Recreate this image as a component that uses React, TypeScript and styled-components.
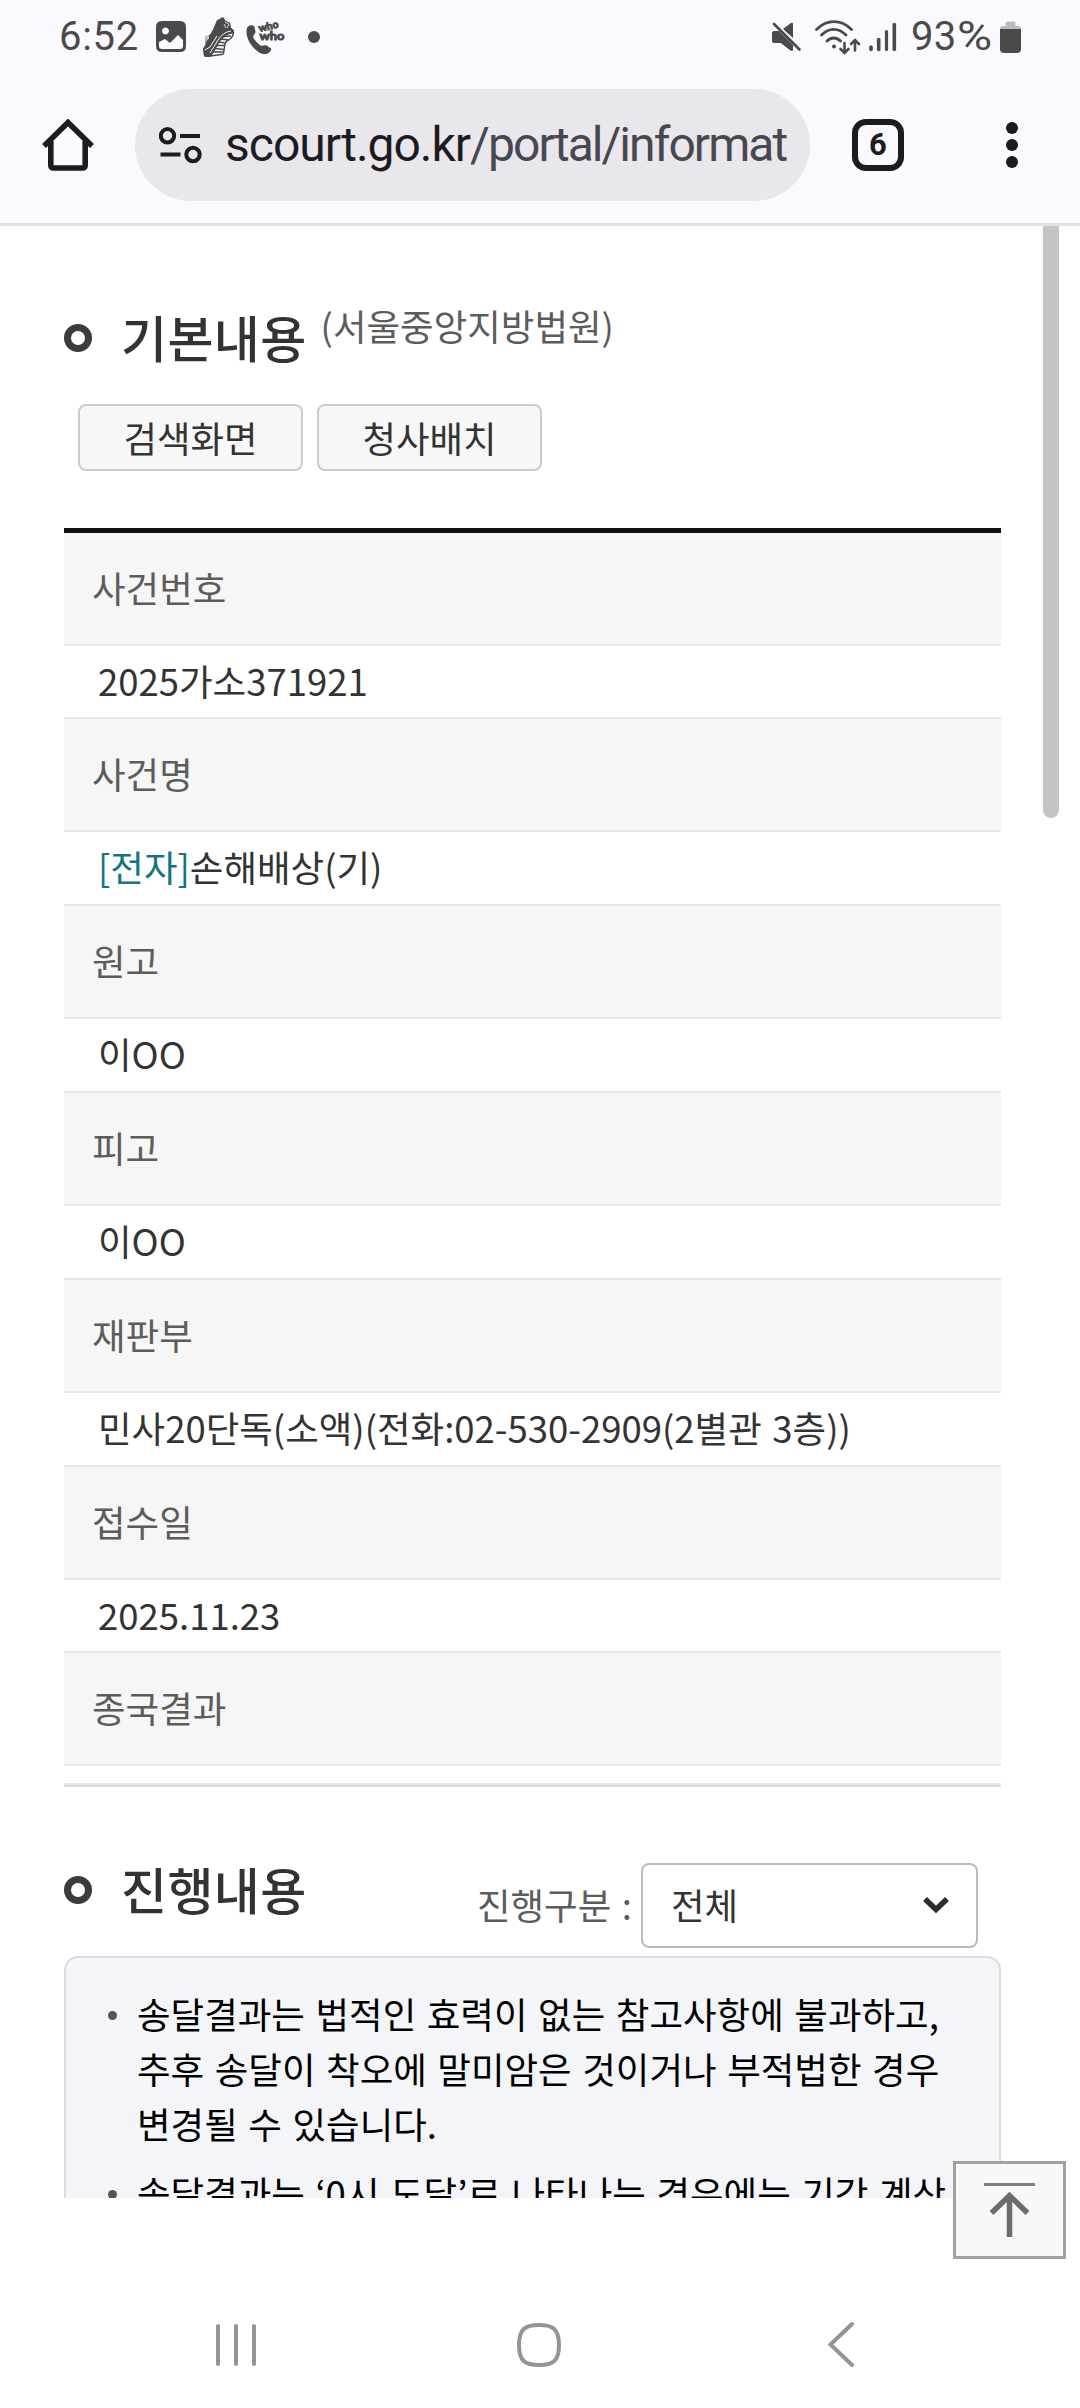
import React from "react";
import styled, { createGlobalStyle } from "styled-components";

const korean = `"Noto Sans CJK KR", "Noto Sans", sans-serif`;
const system = `Roboto, "Noto Sans CJK KR", sans-serif`;
const ink = "#1b1b20";
const statusInk = "#4a4a4a";

const GlobalStyle = createGlobalStyle`
  *, *::before, *::after { box-sizing: border-box; }
  html, body { margin: 0; padding: 0; background: #fff; }
`;

const Screen = styled.div`
  width: 1080px;
  height: 2408px;
  display: flex;
  flex-direction: column;
  overflow: hidden;
  background: #fff;
  font-family: ${korean};
`;

const BrowserHead = styled.header`
  height: 226px;
  flex: none;
  background: #faf9ff;
  border-bottom: 3px solid #e2e1e8;
`;

const StatusBar = styled.div`
  height: 74px;
  display: flex;
  align-items: center;
  justify-content: space-between;
  padding: 0 59px 0 59px;
  color: ${statusInk};
  font-family: ${system};
  font-size: 40px;
  line-height: 74px;
`;

const StatusGroup = styled.div`
  display: flex;
  align-items: center;
  svg { display: block; flex: none; }
`;

const Clock = styled.span`
  width: 94px;
  letter-spacing: 0.7px;
`;

const Charge = styled.span`
  width: 89px;
  letter-spacing: 0.3px;
  white-space: nowrap;
`;

const Percent = styled.span`
  display: inline-block;
  transform: scaleX(1.2);
  transform-origin: left center;
`;

const Toolbar = styled.div`
  height: 142px;
  display: flex;
  align-items: center;
  padding: 0 0 0 42px;
  svg { display: block; flex: none; }
`;

const AddressBar = styled.div`
  width: 675px;
  height: 112px;
  margin-left: 41px;
  padding-left: 24px;
  border-radius: 56px;
  background: #e9e7ec;
  display: flex;
  align-items: center;
`;

const Url = styled.span`
  margin-left: 23px;
  font-family: ${system};
  font-size: 48px;
  line-height: 60px;
  letter-spacing: -1px;
  white-space: nowrap;
  color: ${ink};
`;

const UrlPath = styled.span`
  letter-spacing: -1.95px;
  color: #47474f;
`;

const TabCount = styled.div`
  width: 52px;
  height: 52px;
  margin-left: 42px;
  border: 6px solid ${ink};
  border-radius: 14px;
  display: flex;
  align-items: center;
  justify-content: center;
  font-family: ${system};
  font-size: 31px;
  line-height: 40px;
  font-weight: 700;
  color: ${ink};
`;

const MenuDots = styled.div`
  margin-left: 102px;
  display: flex;
  flex-direction: column;
  gap: 5px;
`;

const MenuDot = styled.i`
  width: 12px;
  height: 12px;
  border-radius: 50%;
  background: ${ink};
`;

const Viewport = styled.main`
  position: relative;
  flex: none;
  height: 1972px;
  overflow: hidden;
  padding: 74px 79px 0 64px;
  word-spacing: 2.4px;
`;

const ScrollThumb = styled.div`
  position: absolute;
  top: 0;
  right: 21px;
  width: 16px;
  height: 592px;
  border-radius: 0 0 8px 8px;
  background: #c4c4c4;
`;

const SectionHead = styled.div`
  display: flex;
  align-items: flex-start;
  height: 74px;
`;

const Ring = styled.i`
  width: 28px;
  height: 28px;
  margin: 24px 29px 0 0;
  border: 7px solid #3c3c3e;
  border-radius: 50%;
  flex: none;
`;

const Title = styled.h2`
  margin: 0;
  font-size: 50px;
  line-height: 72px;
  font-weight: 500;
  letter-spacing: 0.4px;
  color: #333;
`;

const Court = styled.span`
  margin-left: 14px;
  font-size: 36.5px;
  line-height: 52px;
  color: #5c5c5c;
`;

const Actions = styled.div`
  display: flex;
  gap: 14px;
  padding: 30px 0 57px 14px;
`;

const ActionButton = styled.button`
  width: 225px;
  height: 67px;
  padding: 0 0 2px;
  border: 2px solid #ccc;
  border-radius: 8px;
  background: #f7f7f7;
  color: #333;
  font: 400 36.4px/60px ${korean};
`;

const CaseTable = styled.dl`
  margin: 0;
  border-top: 5px solid #111114;
  border-bottom: 2px solid #dcdcdc;
`;

const Label = styled.dt`
  height: 113px;
  padding-left: 28px;
  border-bottom: 2px solid #e8e8e8;
  background: #f6f6f6;
  font-size: 36.5px;
  line-height: 109px;
  color: #5c5c5c;
`;

const Value = styled.dd<{ $height: number }>`
  margin: 0;
  height: ${(p) => p.$height}px;
  padding-left: 34px;
  border-bottom: 2px solid #e8e8e8;
  font-size: 36.5px;
  line-height: 69px;
  color: #333;
  white-space: nowrap;
`;

const Tag = styled.span`
  color: #14747f;
`;

const ProgressHead = styled(SectionHead)`
  height: 103px;
  margin-top: 66px;
`;

const ProgressTitle = styled(Title)`
  line-height: 70px;
`;

const ProgressRing = styled(Ring)`
  margin-top: 23px;
`;

const FilterLabel = styled.label`
  margin: 10px 0 0 auto;
  display: flex;
  align-items: center;
  gap: 9px;
  padding-right: 23px;
  font-size: 36.5px;
  line-height: 83px;
  white-space: pre;
  color: #5c5c5c;
`;

const FilterName = styled.span`
  padding-bottom: 2px;
`;

const Select = styled.span`
  width: 337px;
  height: 85px;
  padding: 0 27px 0 28px;
  border: 2px solid #bbb;
  border-radius: 8px;
  background: #fff;
  display: flex;
  align-items: center;
  justify-content: space-between;
  color: #333;
`;

const Selected = styled.span`
  line-height: 76px;
  padding-bottom: 2px;
`;

const Notice = styled.ul`
  margin: 0;
  height: 420px;
  padding: 28px 0 0 46px;
  list-style: none;
  border: 2px solid #dadce0;
  border-radius: 14px;
  background: #f4f5f8;
`;

const NoticeItem = styled.li`
  display: flex;
  margin-bottom: 14px;
  font-size: 36.5px;
  line-height: 55px;
  color: #000;
  white-space: pre;
`;

const Bullet = styled.i`
  width: 9px;
  height: 9px;
  margin: 25px 20px 0 -4px;
  border-radius: 50%;
  background: #555;
  flex: none;
`;

const NavBar = styled.nav`
  height: 210px;
  flex: none;
  display: flex;
  align-items: flex-start;
  justify-content: space-between;
  padding: 122px 222px 0 214px;
  svg { display: block; }
`;

const HomeKey = styled.svg`
  margin-right: 7px;
`;

const TopButton = styled.button`
  position: absolute;
  left: 953px;
  top: 2161px;
  width: 113px;
  height: 98px;
  padding: 0;
  border: 3px solid #a2a2a2;
  background: #f8f8f8;
  svg { display: block; }
`;

const Space = styled.span<{ $w: number }>`
  width: ${(p) => p.$w}px;
  flex: none;
`;

const NoticeDot = styled.i`
  width: 12px;
  height: 12px;
  border-radius: 50%;
  background: ${statusInk};
`;

const GalleryIcon = () => (
  <svg width="32" height="32" viewBox="0 0 32 32">
    <path
      fill={statusInk}
      fillRule="evenodd"
      d="M7 0h18q6 0 6 6v19q0 6-6 6H7q-6 0-6-6V6q0-6 6-6zM4 21v4q0 3 3 3h18q3 0 3-3v-6l-5-5-8 8-5-4zM10.500 6.500a3.500 3.500 0 1 0 .01 0z"
    />
  </svg>
);

const ShoeIcon = () => (
  <svg width="32" height="40" viewBox="0 0 32 40">
    <path
      fill={statusInk}
      d="M14 3l3-1 1-1.500h3l1 3 5 2 1 5 3 3v3c-6 0-10 3-14 8-2 3-5 9-9 15l-6 1-1.500-3-.5-6 2.500-4-.5-8 5-2 3-5z"
    />
    <path d="M2 20q0-2 4-2v4q-2 0-3 4z" fill="#faf9ff" opacity=".7" />
    <path d="M28 14q-8 1-13 9L7 36M2 33l5-3 7-11" stroke="#faf9ff" strokeWidth="1" fill="none" />
    <path d="M22 5l4 2-2 4M21 7l2 4" stroke="#faf9ff" strokeWidth=".8" fill="none" />
    <path
      d="M5 39.300l15.500-2M10 35h10.500M12 31.500l9 1M13 28.500h9M15 25l8 1M17 22l9 1M20 19.500l8-.5M30.500 15q0 5-5 8-4 2-4 7l-1 7"
      stroke={statusInk}
      strokeWidth="1.400"
      fill="none"
    />
  </svg>
);

const WhoWhoIcon = () => (
  <svg width="42" height="40" viewBox="0 0 42 40" overflow="visible">
    <path
      fill={statusInk}
      d="M2 11c1-3 6-4 7.500-1l1 5c0 2-2.500 3-2.500 5 2 4 4.500 6 7.500 8.500 2 1 4-1 6 0l4.500 3c1 2-2 5-5 5.500-5 1-11-3.500-15-9.500C2.500 23 .5 16 2 11z"
    />
    <g fill={statusInk} stroke={statusInk} strokeWidth=".9" fontFamily="Lato, sans-serif" fontWeight="700">
      <text x="14.500" y="15" fontSize="10.500" textLength="20" lengthAdjust="spacingAndGlyphs" transform="rotate(-13 14.500 15)">
        who
      </text>
      <text x="14.500" y="23.300" fontSize="11.500" textLength="25" lengthAdjust="spacingAndGlyphs">
        who
      </text>
    </g>
  </svg>
);

const MuteIcon = () => (
  <svg width="32" height="32" viewBox="0 0 32 32">
    <path fill={statusInk} d="M1 13q0-3 3-3h4l14 13v5q0 3-3 1l-9-7H4q-3 0-3-3zM12 8l8-6q2-1 2 1v14z" />
    <path d="M3 3l26 26" stroke="#faf9ff" strokeWidth="5" />
    <path fill={statusInk} d="M1 13q0-3 3-3h4l14 14v4q0 3-3 1l-9-7H4q-3 0-3-3z" />
    <path d="M3 3l25.500 25.500" stroke={statusInk} strokeWidth="2.600" strokeLinecap="round" />
  </svg>
);

const WifiIcon = () => (
  <svg width="46" height="36" viewBox="0 0 46 36" fill="none" stroke={statusInk} strokeWidth="2.800" strokeLinecap="round">
    <path d="M1.500 10.500C12 0 26 0 36.500 10.500M6.500 16C14 8.500 23.500 8.500 31 16M12 22C16 18 21.500 18 25.500 22" />
    <circle cx="19" cy="27.500" r="2" fill={statusInk} stroke="none" />
    <path d="M29.500 24v9M25.500 30l4 4 4-4M40 31.500v-10M36 25l4-4 4 4" strokeWidth="2.600" />
  </svg>
);

const SignalIcon = () => (
  <svg width="28" height="30" viewBox="0 0 28 30" stroke={statusInk} strokeWidth="3.600" strokeLinecap="round">
    <path d="M2 25v2.500" />
    <path d="M9.700 17.500v10" />
    <path d="M17.500 9.500v18" strokeWidth="3.200" />
    <path d="M25.300 2.500v25" />
  </svg>
);

const BatteryIcon = () => (
  <svg width="21" height="32" viewBox="0 0 21 32">
    <path fill="#bdbdc1" d="M5.500 2q0-1.500 1.500-1.500h7q1.500 0 1.500 1.500v3H18q3 0 3 3H0q0-3 3-3h2.500z" />
    <path fill={statusInk} d="M0 8h21v20q0 4-4 4H4q-4 0-4-4z" />
  </svg>
);

const HomeIcon = () => (
  <svg width="52" height="52" viewBox="0 0 52 52" fill="none" stroke={ink} strokeWidth="5.600">
    <path d="M2 27L26 3.500 50 27" strokeLinejoin="miter" />
    <path d="M8.800 22v24q0 3 3 3h28.400q3 0 3-3V22" />
  </svg>
);

const TuneIcon = () => (
  <svg width="43" height="37" viewBox="0 0 43 37" fill="none" stroke={ink} strokeWidth="4">
    <circle cx="8.500" cy="8.800" r="6.700" />
    <circle cx="34" cy="27.500" r="6.700" />
    <path d="M21 9h20M1.500 27.500h20" />
  </svg>
);

const Chevron = () => (
  <svg width="26" height="18" viewBox="0 0 26 18">
    <path d="M2 2l11 10.500L24 2" fill="none" stroke="#2e2e30" strokeWidth="5.600" />
  </svg>
);

const cases: { label: string; tag?: string; value: string; height: number }[] = [
  { label: "사건번호", value: "2025가소371921", height: 73 },
  { label: "사건명", tag: "[전자]", value: "손해배상(기)", height: 74 },
  { label: "원고", value: "이OO", height: 74 },
  { label: "피고", value: "이OO", height: 74 },
  { label: "재판부", value: "민사20단독(소액)(전화:02-530-2909(2별관 3층))", height: 74 },
  { label: "접수일", value: "2025.11.23", height: 73 },
  { label: "종국결과", value: "", height: 19 },
];

const notices = [
  "송달결과는 법적인 효력이 없는 참고사항에 불과하고,\n추후 송달이 착오에 말미암은 것이거나 부적법한 경우\n변경될 수 있습니다.",
  "송달결과는 ‘0시 도달’로 나타나는 경우에는 기간 계산",
];

export default function App() {
  return (
    <Screen>
      <GlobalStyle />
      <BrowserHead>
        <StatusBar>
          <StatusGroup>
            <Clock>6:52</Clock>
            <Space $w={2} />
            <GalleryIcon />
            <Space $w={16} />
            <ShoeIcon />
            <Space $w={10} />
            <WhoWhoIcon />
            <Space $w={21} />
            <NoticeDot />
          </StatusGroup>
          <StatusGroup>
            <MuteIcon />
            <Space $w={12} />
            <WifiIcon />
            <Space $w={8} />
            <SignalIcon />
            <Space $w={14} />
            <Charge>
              93<Percent>%</Percent>
            </Charge>
            <BatteryIcon />
          </StatusGroup>
        </StatusBar>
        <Toolbar>
          <HomeIcon />
          <AddressBar>
            <TuneIcon />
            <Url>
              scourt.go.kr<UrlPath>/portal/informat</UrlPath>
            </Url>
          </AddressBar>
          <TabCount>6</TabCount>
          <MenuDots>
            <MenuDot />
            <MenuDot />
            <MenuDot />
          </MenuDots>
        </Toolbar>
      </BrowserHead>

      <Viewport>
        <SectionHead>
          <Ring />
          <Title>기본내용</Title>
          <Court>(서울중앙지방법원)</Court>
        </SectionHead>
        <Actions>
          <ActionButton>검색화면</ActionButton>
          <ActionButton>청사배치</ActionButton>
        </Actions>
        <CaseTable>
          {cases.map((c) => (
            <React.Fragment key={c.label}>
              <Label>{c.label}</Label>
              <Value $height={c.height}>
                {c.tag && <Tag>{c.tag}</Tag>}
                {c.value}
              </Value>
            </React.Fragment>
          ))}
        </CaseTable>
        <ProgressHead>
          <ProgressRing />
          <ProgressTitle>진행내용</ProgressTitle>
          <FilterLabel>
            <FilterName>진행구분 :</FilterName>
            <Select>
              <Selected>전체</Selected>
              <Chevron />
            </Select>
          </FilterLabel>
        </ProgressHead>
        <Notice>
          {notices.map((n) => (
            <NoticeItem key={n}>
              <Bullet />
              <span>{n}</span>
            </NoticeItem>
          ))}
        </Notice>
        <ScrollThumb />
      </Viewport>

      <NavBar>
        <svg width="44" height="50" viewBox="0 0 44 50" stroke="#949494" strokeWidth="4" strokeLinecap="round">
          <path d="M4 6v38M22 6v38M40 6v38" />
        </svg>
        <HomeKey width="48" height="50" viewBox="0 0 48 50" fill="none" stroke="#949494" strokeWidth="4">
          <path d="M24 5C38 5 44 9 44 25S38 45 24 45 4 41 4 25 10 5 24 5z" />
        </HomeKey>
        <svg width="32" height="50" viewBox="0 0 32 50" fill="none" stroke="#949494" strokeWidth="4" strokeLinecap="round">
          <path d="M26 4L4.500 24.500 26 45" />
        </svg>
      </NavBar>

      <TopButton aria-label="맨 위로">
        <svg width="107" height="92" viewBox="0 0 107 92" fill="none" stroke="#6c6c6c">
          <path d="M28 20.500h51" strokeWidth="3" stroke="#808080" />
          <path d="M53.500 73V31M35.500 49l18-17.500 18 17.500" strokeWidth="5.500" />
        </svg>
      </TopButton>
    </Screen>
  );
}
